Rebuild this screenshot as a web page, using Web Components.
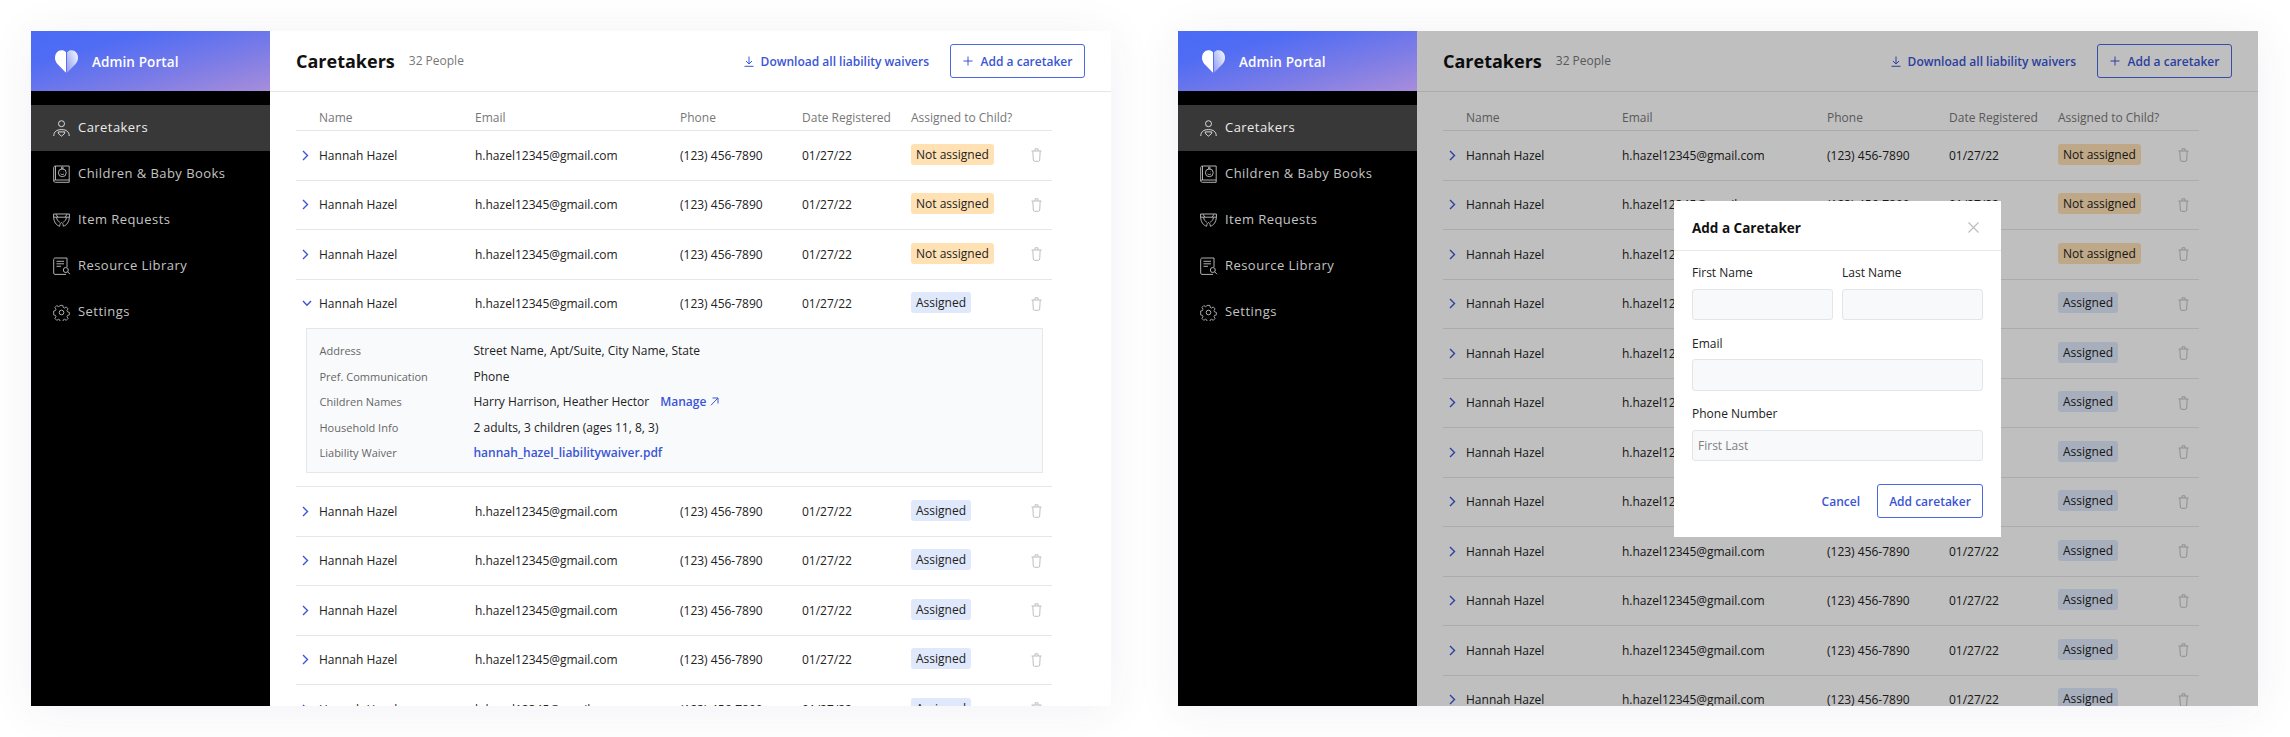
<!DOCTYPE html>
<html>
<head>
<meta charset="utf-8">
<title>Admin Portal</title>
<style>
html, body { margin: 0; background: #fff; }
body {
    width: 2290px;
    height: 737px;
    overflow: hidden;
    box-sizing: border-box;
    padding: 31px 0 0 31px;
    display: flex;
    gap: 67px;
    align-items: flex-start;
    font-family: "Open Sans", sans-serif;
}
</style>
</head>
<body>
<admin-screen rows="12" open-row="3"></admin-screen>
<admin-screen rows="12" dimmed><add-caretaker-dialog></add-caretaker-dialog></admin-screen>

<script>
const ICONS = {
    person: `<svg width="17" height="17" viewBox="0 0 17 17" fill="none" stroke="currentColor" stroke-width=".9"><circle cx="8.5" cy="3.7" r="3"/><path d="M.8 16c0-4.2 2.6-6.4 7.7-6.4s7.7 2.2 7.7 6.4"/><path d="M5.2 11.9h6.6c.3 1.6-1.5 3-3.3 4.2-1.8-1.2-3.6-2.6-3.3-4.2z"/></svg>`,
    book: `<svg width="17" height="18" viewBox="0 0 17 18" fill="none" stroke="currentColor" stroke-width=".9"><path d="M2.5 1h13.7v14H2.500C1.400 15 .7 15.700 .7 16.100S1.400 17.300 2.500 17.300h13.700V15"/><path d="M.7 16.100V2.800C.7 1.700 1.400 1 2.500 1v14"/><circle cx="9.300" cy="7.800" r="3.900"/><circle cx="9.300" cy="3" r="1"/><path d="M7.600 8.800c.8 1 2.600 1 3.400 0M7.800 6.800h.4M10.400 6.800h.4"/></svg>`,
    diaper: `<svg width="17" height="14" viewBox="0 0 17 14" fill="none" stroke="currentColor" stroke-width=".9"><path d="M.6 1h15.800v3.200H.6z"/><path d="M.6 4.200C1 9 3.200 12.300 6.600 13.200c.5-2.700 1-3.600 1.900-3.600s1.400.9 1.900 3.600c3.400-.9 5.600-4.200 6-9"/><path d="M3 1.200l1.800 3M14 1.200l-1.800 3M3.500 4.500c.4 2.200 1.500 3.800 3.300 4.700M13.500 4.500c-.4 2.200-1.500 3.800-3.300 4.700"/></svg>`,
    library: `<svg width="18" height="18" viewBox="0 0 18 18" fill="none" stroke="currentColor" stroke-width=".9"><path d="M14 10V1H2.200C1.300 1 .7 1.600 .7 2.500v13.700c0 .7.500 1.200 1.200 1.200H13"/><path d="M3.500 4.300h7.500M3.500 6.800h7.500M3.500 9.300h4.500"/><circle cx="12.800" cy="13" r="2.500"/><path d="M14.700 14.800l2.300 2.400"/></svg>`,
    gear: `<svg width="17" height="17" viewBox="0 0 17 17" fill="none" stroke="currentColor" stroke-width=".9"><circle cx="8.500" cy="8.500" r="2.300"/><path d="M7 .6h3l.4 2.200 1.500.7 1.900-1.200 2 2.200-1.200 1.800.6 1.500 2 .5v2.900l-2 .5-.6 1.500 1.200 1.800-2 2.200-1.900-1.200-1.500.7-.4 2.200H7l-.4-2.200-1.500-.7-1.900 1.200-2-2.200 1.200-1.800-.6-1.500-2-.5V6.800l2-.5.600-1.500L1.200 3l2-2.200 1.900 1.200 1.500-.7z" transform="translate(.85 .85) scale(.9)"/></svg>`,
    right: `<svg width="7" height="11" viewBox="0 0 7 11" fill="none" stroke="currentColor" stroke-width="1.400"><path d="M1 1l4.500 4.500L1 10"/></svg>`,
    down: `<svg width="10" height="7" viewBox="0 0 10 7" fill="none" stroke="currentColor" stroke-width="1.400"><path d="M1 1l4 4.300L9 1"/></svg>`,
    trash: `<svg width="11" height="14" viewBox="0 0 11 14" fill="none" stroke="currentColor" stroke-width="1"><path d="M.5 3h10M4 3V.8h3V3M1.800 3l.5 9c0 .8.500 1.300 1.200 1.300h4c.7 0 1.200-.5 1.200-1.300l.5-9"/></svg>`,
    download: `<svg width="10" height="11" viewBox="0 0 10 11" fill="none" stroke="currentColor" stroke-width="1"><path d="M5 .5v7M2 5l3 3 3-3M.5 10.300h9"/></svg>`,
    plus: `<svg width="10" height="10" viewBox="0 0 10 10" fill="none" stroke="currentColor" stroke-width="1"><path d="M5 .5v9M.5 5h9"/></svg>`,
    external: `<svg width="9" height="9" viewBox="0 0 9 9" fill="none" stroke="currentColor" stroke-width="1"><path d="M1 8.200L8 1M2.500 1H8v5.500"/></svg>`,
    close: `<svg width="11" height="11" viewBox="0 0 11 11" fill="none" stroke="currentColor" stroke-width="1.200"><path d="M.5.500l10 10M10.500.500l-10 10"/></svg>`,
    heart: `<svg width="23" height="23" viewBox="0 0 23 23"><defs><linearGradient id="fold" x1="0" y1="1" x2="1" y2=".1"><stop offset="0" stop-color="#fff" stop-opacity=".3"/><stop offset="1" stop-color="#fff" stop-opacity=".95"/></linearGradient></defs><path fill="#fff" d="M11 22.800L2.400 13.900C.8 12.100 0 10.200 0 7.800 0 3.500 2.800 .2 6.400 .2c1.900 0 3.600.6 4.600 2.100z"/><path fill="url(#fold)" d="M12 22.800V2.300C13 .8 14.700 .2 16.600 .2c3.600 0 6.400 3.300 6.400 7.600 0 2.400-.8 4.300-2.400 6.100z"/></svg>`
};

class AppIcon extends HTMLElement {
    constructor() {
        super();
        this.attachShadow({mode: "open"});
        this.shadowRoot.innerHTML = `<style>
:host { display: inline-flex; align-items: center; justify-content: center; flex: none; }
svg { display: block; }
</style>${ICONS[this.getAttribute("name")] || ""}`;
    }
}
customElements.define("app-icon", AppIcon);

class NavItem extends HTMLElement {
    constructor() {
        super();
        this.attachShadow({mode: "open"});
        this.shadowRoot.innerHTML = `<style>
:host {
    display: flex;
    align-items: center;
    box-sizing: border-box;
    height: 46px;
    padding: 0 0 2px 22px;
    color: #c4c4c4;
    font-size: 13px;
    letter-spacing: .45px;
}
:host([active]) { background: #383838; color: #ececec; }
.ic { width: 17px; display: flex; justify-content: center; margin-right: 8px; position: relative; top: 1px; }
</style>
<span class="ic"><app-icon name="${this.getAttribute("icon")}"></app-icon></span>
<slot></slot>`;
    }
}
customElements.define("nav-item", NavItem);

class SideNav extends HTMLElement {
    constructor() {
        super();
        this.attachShadow({mode: "open"});
        this.shadowRoot.innerHTML = `<style>
:host { display: block; width: 239px; flex: none; background: #000; }
.brand {
    height: 60px;
    box-sizing: border-box;
    display: flex;
    align-items: center;
    padding: 1px 0 0 24px;
    gap: 14px;
    color: #fff;
    font-size: 13.500px;
    font-weight: 600;
    letter-spacing: .1px;
    background: linear-gradient(165deg, #4a6bf5 0%, #4f6cf4 25%, #7c7ce6 65%, #a88ddb 100%);
}
nav { padding-top: 14px; }
</style>
<div class="brand"><app-icon name="heart"></app-icon>Admin Portal</div>
<nav>
<nav-item icon="person" active>Caretakers</nav-item>
<nav-item icon="book">Children &amp; Baby Books</nav-item>
<nav-item icon="diaper">Item Requests</nav-item>
<nav-item icon="library">Resource Library</nav-item>
<nav-item icon="gear">Settings</nav-item>
</nav>`;
    }
}
customElements.define("side-nav", SideNav);

class OutlineButton extends HTMLElement {
    constructor() {
        super();
        this.attachShadow({mode: "open"});
        this.shadowRoot.innerHTML = `<style>
:host {
    display: inline-flex;
    align-items: center;
    justify-content: center;
    gap: 8px;
    box-sizing: border-box;
    height: 34px;
    border: 1px solid #4a68e0;
    border-radius: 3px;
    background: transparent;
    color: #3a55d6;
    font-size: 12px;
    font-weight: 600;
}
</style><slot></slot>`;
    }
}
customElements.define("outline-button", OutlineButton);

class PageHeader extends HTMLElement {
    constructor() {
        super();
        this.attachShadow({mode: "open"});
        this.shadowRoot.innerHTML = `<style>
:host {
    display: flex;
    align-items: center;
    box-sizing: border-box;
    height: 61px;
    padding: 0 26px 0 26px;
    border-bottom: 1px solid #e6e6e6;
}
h1 { margin: 0; font-size: 18px; font-weight: 700; color: #111; }
.count { margin-left: 14px; font-size: 12px; color: #777; position: relative; top: -1px; }
.dl {
    margin-left: auto;
    display: flex;
    align-items: center;
    gap: 7px;
    color: #3a55d6;
    font-size: 12px;
    font-weight: 600;
}
outline-button { margin-left: 21px; width: 135px; }
</style>
<h1>Caretakers</h1>
<span class="count">32 People</span>
<span class="dl"><app-icon name="download"></app-icon>Download all liability waivers</span>
<outline-button><app-icon name="plus"></app-icon>Add a caretaker</outline-button>`;
    }
}
customElements.define("page-header", PageHeader);

class StatusBadge extends HTMLElement {
    constructor() {
        super();
        this.attachShadow({mode: "open"});
        this.shadowRoot.innerHTML = `<style>
:host {
    display: inline-flex;
    align-items: center;
    height: 21px;
    padding: 0 5px;
    border-radius: 3px;
    font-size: 12px;
    color: #222;
    background: #dfe9fb;
    position: relative;
    top: -1px;
}
:host([warn]) { background: #ffe1b4; }
</style><slot></slot>`;
    }
}
customElements.define("status-badge", StatusBadge);

const COLUMNS = "23px 156px 205px 122px 109px 120px 20px";

class TableHead extends HTMLElement {
    constructor() {
        super();
        this.attachShadow({mode: "open"});
        this.shadowRoot.innerHTML = `<style>
:host {
    display: grid;
    grid-template-columns: ${COLUMNS};
    align-items: center;
    height: 39px;
    box-sizing: border-box;
    padding-top: 13px;
    border-bottom: 1px solid #e6e6e6;
    font-size: 12px;
    color: #777;
}
</style>
<span></span><span>Name</span><span>Email</span><span>Phone</span><span>Date Registered</span><span>Assigned to Child?</span><span></span>`;
    }
}
customElements.define("table-head", TableHead);

class CaretakerRow extends HTMLElement {
    constructor() {
        super();
        this.attachShadow({mode: "open"});
        const open = this.hasAttribute("open");
        const warn = this.hasAttribute("warn");
        this.shadowRoot.innerHTML = `<style>
:host { display: block; border-bottom: 1px solid #e6e6e6; font-size: 12px; color: #222; }
.cells {
    display: grid;
    grid-template-columns: ${COLUMNS};
    align-items: center;
    height: 48.500px;
}
.chev { color: #3a55d6; padding-left: 6px; display: flex; }
.trash { color: #bfbfbf; justify-self: start; display: flex; }
</style>
<div class="cells">
<span class="chev"><app-icon name="${open ? "down" : "right"}"></app-icon></span>
<span>Hannah Hazel</span>
<span>h.hazel12345@gmail.com</span>
<span>(123) 456-7890</span>
<span>01/27/22</span>
<span><status-badge ${warn ? "warn" : ""}>${warn ? "Not assigned" : "Assigned"}</status-badge></span>
<span class="trash"><app-icon name="trash"></app-icon></span>
</div>
<slot></slot>`;
    }
}
customElements.define("caretaker-row", CaretakerRow);

class RowDetails extends HTMLElement {
    constructor() {
        super();
        this.attachShadow({mode: "open"});
        this.shadowRoot.innerHTML = `<style>
:host {
    display: block;
    box-sizing: border-box;
    height: 145px;
    margin: 0 9px 13px 9.500px;
    padding: 9px 13px 0;
    background: #f9fafc;
    border: 1px solid #e6e7ea;
}
.line { display: grid; grid-template-columns: 154px 1fr; align-items: center; height: 25.500px; font-size: 12px; color: #222; }
.k { font-size: 11px; color: #666; }
.link { color: #3a55d6; font-weight: 600; }
.manage { margin-left: 11px; display: inline-flex; align-items: center; gap: 4px; }
</style>
<div class="line"><span class="k">Address</span><span>Street Name, Apt/Suite, City Name, State</span></div>
<div class="line"><span class="k">Pref. Communication</span><span>Phone</span></div>
<div class="line"><span class="k">Children Names</span><span>Harry Harrison, Heather Hector<span class="link manage">Manage<app-icon name="external"></app-icon></span></span></div>
<div class="line"><span class="k">Household Info</span><span>2 adults, 3 children (ages 11, 8, 3)</span></div>
<div class="line"><span class="k">Liability Waiver</span><span class="link">hannah_hazel_liabilitywaiver.pdf</span></div>`;
    }
}
customElements.define("row-details", RowDetails);

class AdminScreen extends HTMLElement {
    constructor() {
        super();
        this.attachShadow({mode: "open"});
        const total = Number(this.getAttribute("rows"));
        const openRow = this.hasAttribute("open-row") ? Number(this.getAttribute("open-row")) : -1;
        let rows = "";
        for (let i = 0; i < total; i++) {
            const warn = i < 3 ? "warn" : "";
            rows += i === openRow
                ? `<caretaker-row open ${warn}><row-details></row-details></caretaker-row>`
                : `<caretaker-row ${warn}></caretaker-row>`;
        }
        this.shadowRoot.innerHTML = `<style>
:host {
    display: flex;
    flex: none;
    width: 1080px;
    height: 675px;
    background: #fff;
    box-shadow: 0 4px 44px rgba(50, 60, 110, .07);
    font-family: "Open Sans", sans-serif;
}
main { flex: 1; min-width: 0; position: relative; overflow: hidden; }
.table { margin: 0 59px 0 26px; }
.shade { display: none; }
:host([dimmed]) .shade {
    display: flex;
    align-items: center;
    justify-content: center;
    position: absolute;
    inset: 0;
    background: rgba(0, 0, 0, .25);
}
</style>
<side-nav></side-nav>
<main>
<page-header></page-header>
<div class="table"><table-head></table-head>${rows}</div>
<div class="shade"><slot></slot></div>
</main>`;
    }
}
customElements.define("admin-screen", AdminScreen);

class FormField extends HTMLElement {
    constructor() {
        super();
        this.attachShadow({mode: "open"});
        const hint = this.getAttribute("hint") || "";
        this.shadowRoot.innerHTML = `<style>
:host { display: block; flex: 1; min-width: 0; font-size: 12px; color: #222; }
label { display: block; height: 24.500px; line-height: 17px; }
.box {
    box-sizing: border-box;
    height: 31.500px;
    padding-left: 5px;
    display: flex;
    align-items: center;
    background: #f8f9fa;
    border: 1px solid #e4e5e8;
    border-radius: 3px;
    font-size: 12px;
    color: #808080;
}
</style>
<label><slot></slot></label>
<div class="box">${hint}</div>`;
    }
}
customElements.define("form-field", FormField);

class AddCaretakerDialog extends HTMLElement {
    constructor() {
        super();
        this.attachShadow({mode: "open"});
        this.shadowRoot.innerHTML = `<style>
:host { display: block; width: 327px; height: 336px; background: #fff; box-sizing: border-box; }
header {
    height: 50px;
    box-sizing: border-box;
    display: flex;
    align-items: center;
    justify-content: space-between;
    padding: 6px 22px 0 18px;
    border-bottom: 1px solid #e8e8e8;
    font-size: 13.500px;
    font-weight: 700;
    color: #111;
}
header app-icon { color: #bdbdbd; position: relative; top: -1px; }
.body { padding: 13.700px 18px 0; display: flex; flex-direction: column; gap: 14.500px; }
.two { display: flex; gap: 9px; }
footer { display: flex; justify-content: flex-end; align-items: center; margin: 23.300px 18px 0; gap: 17px; color: #3a55d6; font-size: 12px; font-weight: 600; }
outline-button { width: 106px; }
</style>
<header>Add a Caretaker<app-icon name="close"></app-icon></header>
<div class="body">
<div class="two"><form-field>First Name</form-field><form-field>Last Name</form-field></div>
<form-field>Email</form-field>
<form-field hint="First Last">Phone Number</form-field>
</div>
<footer><span>Cancel</span><outline-button>Add caretaker</outline-button></footer>`;
    }
}
customElements.define("add-caretaker-dialog", AddCaretakerDialog);
</script>
</body>
</html>
